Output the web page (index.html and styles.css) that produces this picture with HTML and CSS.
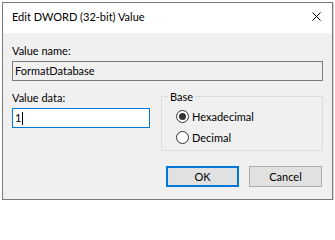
FILE: index.html
```html
<!DOCTYPE html>
<html>
<head>
<meta charset="utf-8">
<link rel="stylesheet" href="styles.css">
</head>
<body>
<div class="window">
  <div class="titlebar">
    <span class="title">Edit DWORD (32-bit) Value</span>
    <svg class="close" width="9" height="9" viewBox="0 0 9 9"><path d="M0.5 0.5 L8.5 8.5 M8.5 0.5 L0.5 8.5" stroke="#000" stroke-width="1" fill="none"/></svg>
  </div>
  <div class="content">
    <div class="label">Value name:</div>
    <div class="field readonly">FormatDatabase</div>
    <div class="row">
      <div class="col">
        <div class="label">Value data:</div>
        <div class="field active">1<span class="caret"></span></div>
      </div>
      <fieldset class="group">
        <legend>Base</legend>
        <div class="radio"><span class="dot checked"></span>Hexadecimal</div>
        <div class="radio"><span class="dot"></span>Decimal</div>
      </fieldset>
    </div>
    <div class="buttons">
      <div class="btn default">OK</div>
      <div class="btn">Cancel</div>
    </div>
  </div>
</div>
</body>
</html>
```
FILE: styles.css
```css
html, body {
  margin: 0;
  padding: 0;
  background: #ffffff;
}
body {
  font-family: Lato, "Liberation Sans", sans-serif;
  font-size: 11px;
  color: #000;
}
.window {
  margin: 2px 0 0 2px;
  width: 331px;
  height: 198px;
  box-sizing: border-box;
  border: 1px solid #7a7a7a;
  box-shadow: 1px 1px 1px rgba(0,0,0,0.15);
  background: #f0f0f0;
  display: flex;
  flex-direction: column;
}
.titlebar {
  flex: none;
  height: 30px;
  box-sizing: border-box;
  background: #ffffff;
  display: flex;
  align-items: center;
  justify-content: space-between;
  padding: 0 11px 3px 9px;
}
.title {
  line-height: 15px;
}
.close {
  display: block;
}
.content {
  flex: 1;
  display: flex;
  flex-direction: column;
  padding: 10px 9px 12px 9px;
}
.label {
  line-height: 15px;
}
.field {
  height: 20px;
  box-sizing: border-box;
  margin-top: 3px;
  border: 1px solid #7a7a7a;
  padding-left: 2px;
  line-height: 18px;
  display: flex;
  align-items: center;
}
.readonly {
  background: #f0f0f0;
}
.active {
  background: #ffffff;
  border-color: #0078d7;
}
.caret {
  display: inline-block;
  width: 1px;
  height: 13px;
  background: #000;
  margin-left: 1px;
}
.row {
  display: grid;
  grid-template-columns: 138px 162px;
  column-gap: 11px;
  margin-top: 9px;
  align-items: start;
}
.group {
  margin: 0;
  padding: 3px 0 2px 6px;
  border: 1px solid #dcdcdc;
  min-width: 0;
}
.group legend {
  padding: 0 2px;
  line-height: 13px;
}
.radio {
  height: 21px;
  display: flex;
  align-items: center;
  margin-left: 8px;
}
.dot {
  width: 13px;
  height: 13px;
  box-sizing: border-box;
  border: 1px solid #333;
  border-radius: 50%;
  background: #fff;
  margin-right: 3px;
  display: flex;
  align-items: center;
  justify-content: center;
}
.dot.checked::after {
  content: "";
  width: 7px;
  height: 7px;
  border-radius: 50%;
  background: #333;
}
.buttons {
  display: flex;
  justify-content: flex-end;
  gap: 10px;
  margin-top: auto;
  margin-right: 1px;
}
.btn {
  width: 73px;
  height: 21px;
  box-sizing: border-box;
  border: 1px solid #adadad;
  background: #e1e1e1;
  display: flex;
  align-items: center;
  justify-content: center;
}
.btn.default {
  border: 2px solid #0078d7;
}
```
